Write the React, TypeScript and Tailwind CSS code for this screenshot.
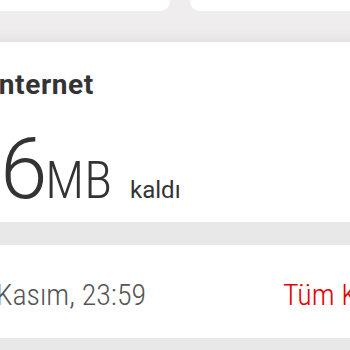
const narrow = "'Liberation Sans Narrow', 'Roboto Condensed', Roboto, sans-serif";

export default function App() {
  return (
    <div
      className="w-[350px] h-[350px] overflow-hidden bg-[#e8e8e8]"
      style={{ fontFamily: "Roboto, 'Liberation Sans', sans-serif" }}
    >
      {/* top tiles */}
      <div className="h-[42px] bg-gradient-to-b from-[#efeded] from-70% to-[#e4e2e2]">
        <div className="flex gap-[20px] ml-[-20px]">
          <div className="h-[11px] w-[190px] shrink-0 bg-white rounded-b-[10px]" />
          <div className="h-[11px] w-[200px] shrink-0 bg-white rounded-b-[10px]" />
        </div>
      </div>

      {/* internet card */}
      <div className="h-[180px] bg-white text-[#333]">
        <div className="pt-[29px] ml-[-10px] text-[28px] font-bold leading-none tracking-[0.6px]">Internet</div>
        <div className="mt-[28px] ml-[-45px] flex items-baseline leading-none whitespace-nowrap">
          <span className="text-[85px] font-light tracking-[-2px]">56</span>
          <span className="text-[52px] font-light" style={{ fontFamily: narrow }}>MB</span>
          <span className="ml-[18px] text-[24px]">kaldı</span>
        </div>
      </div>

      {/* renewal row */}
      <div
        className="mt-[23px] h-[93px] bg-white flex items-center pt-[7px] text-[30px] font-light leading-none whitespace-nowrap"
        style={{ fontFamily: narrow }}
      >
        <span className="ml-[-40px] w-[323px] shrink-0 text-[#555]">30 Kasım, 23:59</span>
        <span className="shrink-0 text-[#e60000]">Tüm Kullanımlar</span>
      </div>
    </div>
  );
}
